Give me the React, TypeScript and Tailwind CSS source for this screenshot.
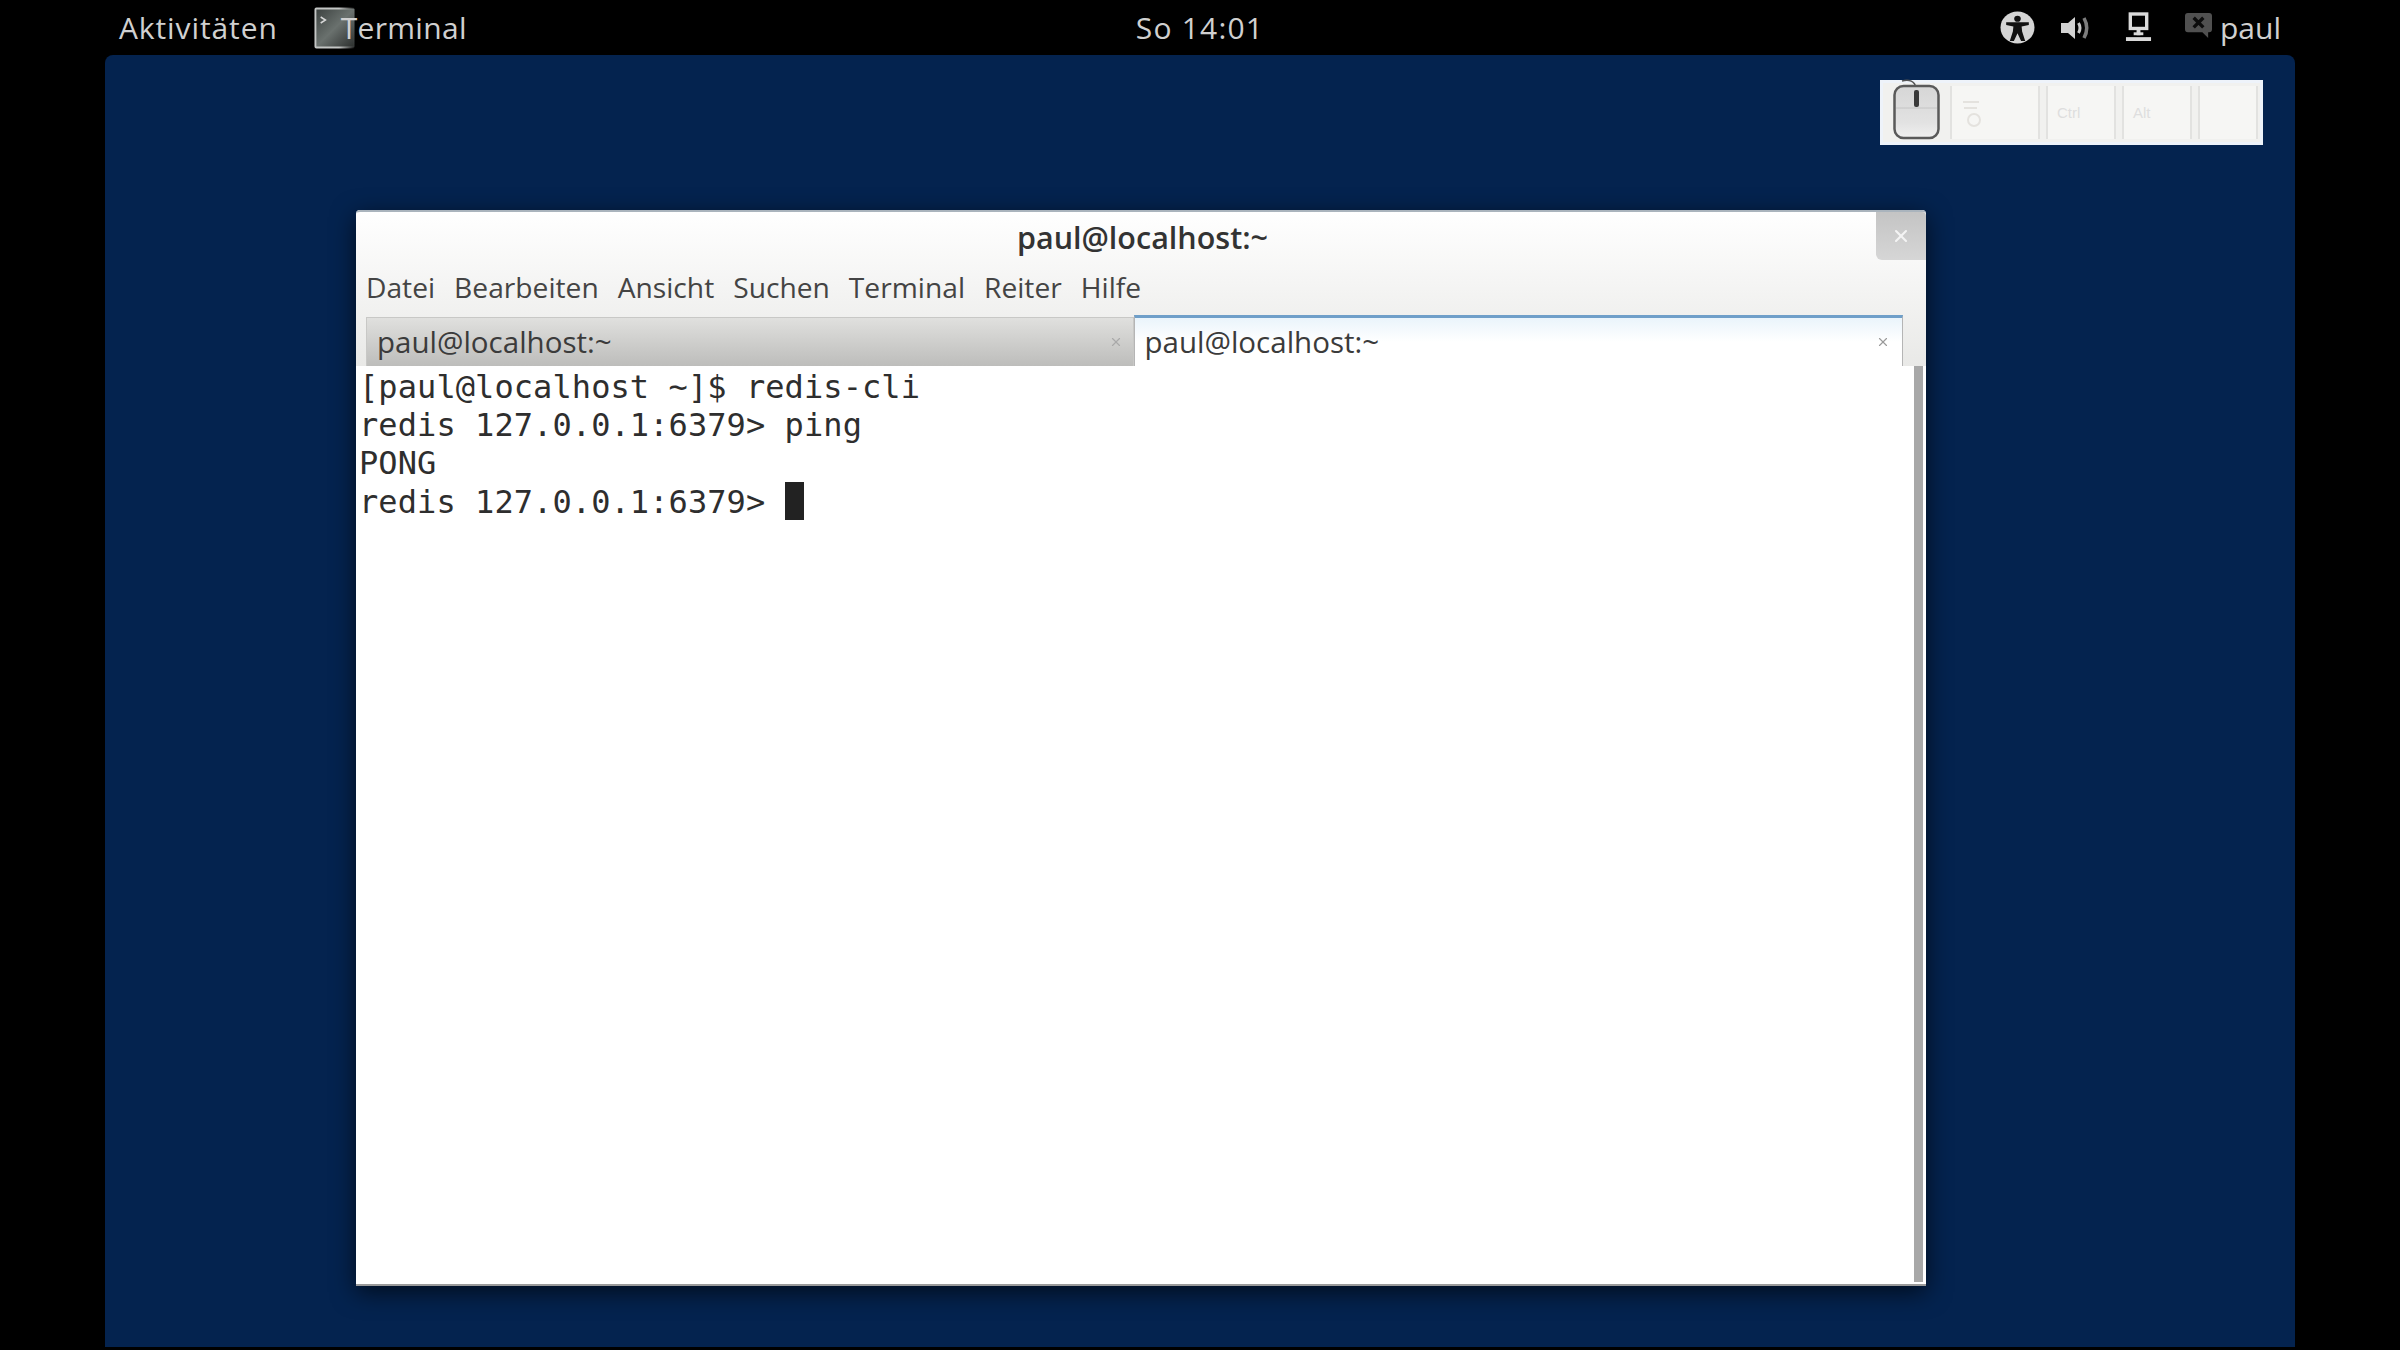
import { X } from "lucide-react"

const ubuntu = "font-['Open_Sans','Noto_Sans',sans-serif]"

function AccessIcon() {
  return (
    <svg width="35" height="33" viewBox="0 0 34 34" preserveAspectRatio="none">
      <circle cx="17" cy="17" r="16.5" fill="#d4d4d4" />
      <circle cx="17" cy="8" r="3.2" fill="#111" />
      <path d="M6 11.5 L28 11.5 L28 14.5 L21 16 L21.5 21 L24.5 31 L20.5 31 L17 23 L13.5 31 L9.5 31 L12.5 21 L13 16 L6 14.5 Z" fill="#111" />
    </svg>
  )
}

function SpeakerIcon() {
  return (
    <svg width="32" height="30" viewBox="0 0 32 30" fill="none">
      <path d="M1 10 H8 L15 4 V26 L8 20 H1 Z" fill="#d2d2d2" />
      <path d="M18.5 10 Q21.5 15 18.5 20" stroke="#c8c8c8" strokeWidth="3" />
      <path d="M24 5 Q29.5 15 24 25" stroke="#7c7c7c" strokeWidth="3.5" />
    </svg>
  )
}

function NetworkIcon() {
  return (
    <svg width="27" height="31" viewBox="0 0 28 32" fill="none">
      <rect x="5.5" y="2" width="17" height="15" stroke="#dadada" strokeWidth="3.5" />
      <rect x="12" y="17" width="4" height="7" fill="#dadada" />
      <rect x="9" y="21" width="10" height="3" fill="#dadada" />
      <rect x="1" y="26" width="26" height="4" fill="#dadada" />
    </svg>
  )
}

function ChatIcon() {
  return (
    <svg width="29" height="27" viewBox="0 0 30 28">
      <path d="M4 1 H26 Q29 1 29 4 V18 Q29 21 26 21 H25 V27 L19 21 H4 Q1 21 1 18 V4 Q1 1 4 1 Z" fill="#505050" />
      <path d="M10 6 L20 16 M20 6 L10 16" stroke="#0c0c0c" strokeWidth="3.5" />
    </svg>
  )
}

function AppIcon() {
  return (
    <svg width="42" height="42" viewBox="0 0 44 42" preserveAspectRatio="none" className="shrink-0">
      <defs>
        <linearGradient id="appFade" x1="0" x2="1" y1="0" y2="1">
          <stop offset="0" stopColor="#3a403e" />
          <stop offset="0.5" stopColor="#6a716e" />
          <stop offset="1" stopColor="#2a2d2c" />
        </linearGradient>
        <linearGradient id="appEdge" x1="0" x2="1" y1="0" y2="0">
          <stop offset="0.6" stopColor="#c4c6c5" />
          <stop offset="1" stopColor="#c4c6c5" stopOpacity="0" />
        </linearGradient>
      </defs>
      <rect x="1.5" y="1.5" width="41" height="39" rx="1" fill="url(#appFade)" stroke="url(#appEdge)" strokeWidth="2" />
      <path d="M7 10 L12 13 L7 16" stroke="#d8d8d8" strokeWidth="1.5" fill="none" />
    </svg>
  )
}

function MouseIcon() {
  return (
    <svg width="47" height="62" viewBox="0 0 47 62" className="shrink-0 -mt-[7px]">
      <defs>
        <linearGradient id="mouseBody" x1="0" x2="0" y1="0" y2="1">
          <stop offset="0" stopColor="#d6d6d6" />
          <stop offset="0.7" stopColor="#e2e2e2" />
          <stop offset="1" stopColor="#f0f0f0" />
        </linearGradient>
      </defs>
      <path d="M23 10 C22 3 16 1 9 3" stroke="#555" strokeWidth="1.5" fill="none" />
      <rect x="1.5" y="8" width="44" height="52" rx="9" fill="url(#mouseBody)" stroke="#5a5a5a" strokeWidth="2.5" />
      <path d="M3 30 H44" stroke="#c4c4c4" strokeWidth="1" />
      <rect x="21" y="12" width="5" height="17" rx="2" fill="#3a3a3a" />
    </svg>
  )
}

function Key({ label, width, shift }: { label?: string; width: string; shift?: boolean }) {
  return (
    <div className={`${width} h-[53px] bg-[#f6f6f4] border-x-2 border-[#e2e2e0] flex flex-col items-start justify-center pl-[9px] text-[15px] leading-none text-[#dedede] font-['Liberation_Sans',sans-serif]`}>
      {shift ? (
        <svg width="26" height="32" viewBox="0 0 26 32" fill="none" stroke="#e4e2de" strokeWidth="2">
          <path d="M2 5 H18" />
          <path d="M3 11 H16" />
          <circle cx="13" cy="23" r="6" />
        </svg>
      ) : (
        label
      )}
    </div>
  )
}

function TopBar() {
  return (
    <div className={`h-[55px] flex items-center justify-between bg-black px-[119px] text-[#d0d0d0] text-[30px] leading-none ${ubuntu}`}>
      <div className="flex-1 flex items-center">
        <span className="tracking-[0.9px]">Aktivitäten</span>
        <div className="flex items-center ml-[36px]">
          <AppIcon />
          <span className="-ml-[15px] tracking-[0.3px]">Terminal</span>
        </div>
      </div>
      <span className="tracking-[1.2px]">So 14:01</span>
      <div className="flex-1 flex items-center justify-end">
        <AccessIcon />
        <div className="ml-[25px]"><SpeakerIcon /></div>
        <div className="ml-[33px]"><NetworkIcon /></div>
        <div className="ml-[32px] -mt-1"><ChatIcon /></div>
        <span className="ml-[7px]">paul</span>
      </div>
    </div>
  )
}

function Tab({ active }: { active?: boolean }) {
  return (
    <div
      className={
        active
          ? "flex-1 h-[51px] -mt-[2px] flex items-center justify-between pl-[10px] pr-[12px] bg-linear-to-b from-[#eaf4fb] via-white to-white border-t-[3px] border-t-[#6f9fc9] border-x border-x-[#b5b5b5]"
          : "flex-1 h-[49px] flex items-center justify-between pl-[10px] pr-[10px] bg-linear-to-b from-[#e0e0de] to-[#bdbdbb] border border-[#c8c8c6] border-b-0"
      }
    >
      <span className="text-[29.5px] leading-none text-[#3b3b3b]">paul@localhost:~</span>
      <X size={14} strokeWidth={2} className={active ? "text-[#9a9a9a]" : "text-[#a9a9a9]"} />
    </div>
  )
}

function TerminalWindow() {
  return (
    <div className={`w-[1570px] h-[1076px] flex flex-col rounded-t-[4px] bg-white shadow-[0_6px_24px_rgba(0,0,0,0.65)] ${ubuntu}`}>
      <div className="bg-linear-to-b from-white to-[#e9e9e7] border-t-2 border-t-[#aab4bd] rounded-t-[4px]">
        <div className="relative h-[50px] flex items-center justify-center pl-[3px]">
          <span className="text-[30.5px] font-semibold leading-none text-[#333]">paul@localhost:~</span>
          <div className="absolute right-0 top-0 w-[50px] h-[48px] rounded-bl-[6px] rounded-tr-[4px] bg-linear-to-b from-[#c4c4c4] to-[#d6d6d6] flex items-center justify-center">
            <X size={20} strokeWidth={2.5} className="text-[#f4f4f4]" />
          </div>
        </div>
        <div className="h-[50px] flex items-center gap-[19px] pl-[10px] text-[28.2px] leading-none text-[#444]">
          {["Datei", "Bearbeiten", "Ansicht", "Suchen", "Terminal", "Reiter", "Hilfe"].map((m) => (
            <span key={m}>{m}</span>
          ))}
        </div>
        <div className="h-[54px] pt-[5px] flex pl-[10px] pr-[23px]">
          <Tab />
          <Tab active />
        </div>
      </div>
      <div className="flex-1 flex min-h-0 pl-[3px] pr-[2px] pb-[2px] border-b-2 border-b-[#9a9a9a]">
        <pre className="flex-1 pt-[2px] text-[32px] tracking-[0.08px] leading-[38.2px] text-[#2e2e2e] font-['DejaVu_Sans_Mono','Liberation_Mono',monospace]">
          <div>[paul@localhost ~]$ redis-cli</div>
          <div>redis 127.0.0.1:6379&gt; ping</div>
          <div>PONG</div>
          <div className="flex items-center">
            <span>redis 127.0.0.1:6379&gt; </span>
            <span className="w-[19px] h-[38px] bg-[#222] -translate-y-[1px]" />
          </div>
        </pre>
        <div className="w-[9px] bg-[#a8a8a8] mr-[1px]" />
      </div>
    </div>
  )
}

export default function App() {
  return (
    <div className="w-[2400px] h-[1350px] bg-black overflow-hidden">
      <TopBar />
      <div className="ml-[105px] w-[2190px] h-[1292px] bg-[#04234f] rounded-t-[8px] relative pt-[155px] pl-[251px]">
        <TerminalWindow />
        <div className="absolute left-[1775px] top-[25px] w-[383px] h-[65px] bg-[#f1f1ef] border-[3px] border-[#eef3fa] flex items-center pl-[10px]">
          <MouseIcon />
          <div className="flex gap-[6px] ml-[10px]">
            <Key shift width="w-[90px]" />
            <Key label="Ctrl" width="w-[70px]" />
            <Key label="Alt" width="w-[70px]" />
            <Key width="w-[60px]" />
          </div>
        </div>
      </div>
    </div>
  )
}
